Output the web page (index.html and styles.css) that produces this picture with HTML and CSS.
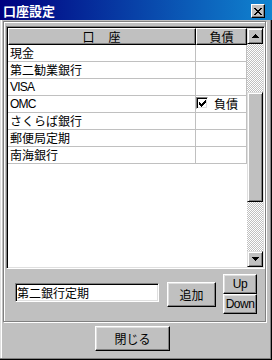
FILE: index.html
```html
<!DOCTYPE html>
<html lang="ja">
<head>
    <meta charset="UTF-8">
    <title>口座設定</title>
    <link rel="stylesheet" href="styles.css">
</head>
<body>
    <div class="window">
        <div class="titlebar">
            <span class="title">口座設定</span>
            <button class="close-btn">
                <svg width="8" height="7" viewBox="0 0 8 7"><path d="M0 0h2v1H0z M6 0h2v1H6z M1 1h2v1H1z M5 1h2v1H5z M2 2h4v1H2z M3 3h2v1H3z M2 4h4v1H2z M1 5h2v1H1z M5 5h2v1H5z M0 6h2v1H0z M6 6h2v1H6z"/></svg>
            </button>
        </div>
        <div class="client">
            <div class="group">
                <div class="grid">
                    <div class="table">
                        <div class="row head">
                            <div class="cell c1">口　座</div>
                            <div class="cell c2">負債</div>
                        </div>
                        <div class="row"><div class="cell c1">現金</div><div class="cell c2"></div></div>
                        <div class="row"><div class="cell c1">第二勧業銀行</div><div class="cell c2"></div></div>
                        <div class="row"><div class="cell c1 latin">VISA</div><div class="cell c2"></div></div>
                        <div class="row">
                            <div class="cell c1 latin">OMC</div>
                            <div class="cell c2">
                                <span class="check">
                                    <svg width="7" height="7" viewBox="0 0 7 7"><path d="M6 0h1v1H6z M5 1h2v1H5z M0 2h1v1H0z M4 2h3v1H4z M0 3h2v1H0z M3 3h3v1H3z M0 4h5v1H0z M1 5h3v1H1z M2 6h1v1H2z"/></svg>
                                </span>
                                <span class="check-label">負債</span>
                            </div>
                        </div>
                        <div class="row"><div class="cell c1">さくらば銀行</div><div class="cell c2"></div></div>
                        <div class="row"><div class="cell c1">郵便局定期</div><div class="cell c2"></div></div>
                        <div class="row"><div class="cell c1">南海銀行</div><div class="cell c2"></div></div>
                    </div>
                    <div class="vscroll">
                        <div class="sbtn">
                            <svg width="7" height="4" viewBox="0 0 7 4"><path d="M3 0h1v1h1v1h1v1h1v1H0V3h1V2h1V1h1z"/></svg>
                        </div>
                        <div class="track"><div class="thumb"></div></div>
                        <div class="sbtn">
                            <svg width="7" height="4" viewBox="0 0 7 4"><path d="M0 0h7v1H6v1H5v1H4v1H3V3H2V2H1V1H0z"/></svg>
                        </div>
                    </div>
                </div>
                <div class="controls">
                    <input class="field" type="text" value="第二銀行定期">
                    <button class="btn add">追加</button>
                    <div class="updown">
                        <button class="btn small">Up</button>
                        <button class="btn small">Down</button>
                    </div>
                </div>
            </div>
            <button class="btn close-dlg">閉じる</button>
        </div>
    </div>
</body>
</html>
```

FILE: styles.css
```css
* {
    box-sizing: border-box;
}
body {
    margin: 0;
    font-family: "Noto Sans CJK JP", sans-serif;
    font-size: 12px;
    color: #000000;
}
.window {
    width: 272px;
    height: 360px;
    background: #c0c0c0;
    box-shadow: inset -1px -1px #000000, inset -2px -2px #808080, inset 1px 0 #dfdfdf, inset 2px 0 #ffffff;
}
.titlebar {
    height: 20px;
    display: flex;
    align-items: center;
    padding: 0 7px 0 3px;
    background: linear-gradient(to right, #000080, #1084d0);
}
.title {
    flex: 1;
    color: #ffffff;
    font-weight: bold;
    font-size: 13px;
    line-height: 20px;
    padding-top: 1px;
}
.close-btn {
    width: 14px;
    height: 14px;
    margin-top: 2px;
    padding: 0;
    display: flex;
    align-items: center;
    justify-content: center;
    background: #c0c0c0;
    border: 1px solid;
    border-color: #ffffff #000000 #000000 #ffffff;
    box-shadow: inset -1px -1px #808080;
}
.client {
    padding: 1px 0 0 3px;
}
.group {
    width: 263px;
    height: 301px;
    border: 1px solid #808080;
    box-shadow: inset 1px 1px #ffffff, 1px 1px #ffffff;
    padding: 4px 0 0 2px;
}
.grid {
    display: flex;
    width: 259px;
    height: 243px;
    padding: 1px;
    background: #ffffff;
    border: 1px solid;
    border-color: #808080 #ffffff #ffffff #808080;
    box-shadow: inset 1px 1px #000000, inset -1px -1px #dfdfdf;
}
.table {
    width: 239px;
}
.row {
    display: flex;
    height: 17px;
}
.cell {
    height: 17px;
    padding-left: 2px;
    line-height: 16px;
    white-space: nowrap;
    border-right: 1px solid #c0c0c0;
    border-bottom: 1px solid #c0c0c0;
}
.c1 {
    width: 188px;
}
.c2 {
    width: 51px;
    display: flex;
    padding-left: 0;
}
.latin {
    font-family: "Liberation Sans", sans-serif;
    font-size: 12px;
    letter-spacing: -0.8px;
}
.head .cell {
    padding: 0;
    justify-content: center;
    text-align: center;
    line-height: 15px;
    background: #c0c0c0;
    border: 1px solid;
    border-color: #ffffff #000000 #000000 #ffffff;
    box-shadow: inset -1px -1px #808080;
}
.head .c1 {
    letter-spacing: 1px;
}
.check {
    width: 12px;
    height: 12px;
    margin-top: 1px;
    display: flex;
    align-items: center;
    justify-content: center;
    background: #ffffff;
    border: 1px solid;
    border-color: #808080 #ffffff #ffffff #808080;
    box-shadow: inset 1px 1px #000000, inset -1px -1px #dfdfdf;
}
.check-label {
    margin-left: 6px;
}
.vscroll {
    width: 16px;
    display: flex;
    flex-direction: column;
}
.sbtn, .thumb {
    background: #c0c0c0;
    border: 1px solid;
    border-color: #dfdfdf #000000 #000000 #dfdfdf;
    box-shadow: inset 1px 1px #ffffff, inset -1px -1px #808080;
}
.sbtn {
    height: 16px;
    display: flex;
    align-items: center;
    justify-content: center;
}
.track {
    flex: 1;
    padding-top: 48px;
    background-color: #c0c0c0;
    background-image: conic-gradient(#ffffff 25%, transparent 0 50%, #ffffff 0 75%, transparent 0);
    background-size: 2px 2px;
}
.thumb {
    height: 110px;
}
.controls {
    display: flex;
    align-items: flex-start;
    margin: 5px 0 0 9px;
}
.field {
    width: 144px;
    height: 19px;
    margin: 9px 0 0 0;
    padding: 0 0 0 1px;
    font: inherit;
    line-height: 15px;
    background: #ffffff;
    border: 1px solid;
    border-color: #808080 #ffffff #ffffff #808080;
    box-shadow: inset 1px 1px #000000, inset -1px -1px #dfdfdf;
    outline: none;
}
.btn {
    padding: 0;
    font: inherit;
    color: #000000;
    background: #c0c0c0;
    border: 1px solid;
    border-color: #ffffff #000000 #000000 #ffffff;
    box-shadow: inset -1px -1px #808080, inset 1px 1px #dfdfdf;
}
.add {
    width: 49px;
    height: 25px;
    margin: 8px 0 0 8px;
}
.updown {
    display: flex;
    flex-direction: column;
    margin-left: 7px;
}
.small {
    width: 34px;
    height: 20px;
    font-family: "Liberation Sans", sans-serif;
    font-size: 12px;
    letter-spacing: -0.5px;
}
.close-dlg {
    display: block;
    width: 75px;
    height: 25px;
    margin: 4px 0 0 92px;
}
```
